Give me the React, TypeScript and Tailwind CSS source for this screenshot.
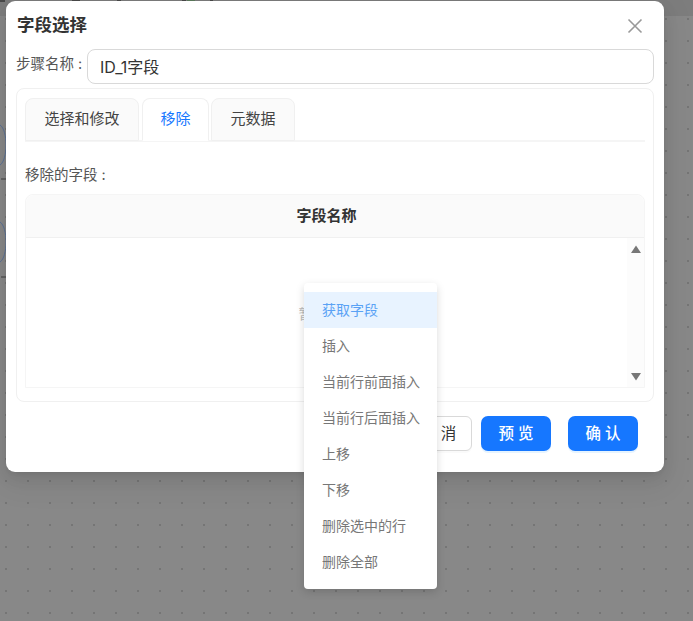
import React from "react";

const font = { fontFamily: 'Inter, "Noto Sans CJK SC", sans-serif' };

const menuItems = ["插入", "当前行前面插入", "当前行后面插入", "上移", "下移", "删除选中的行", "删除全部"];

function CanvasMarks() {
  return (
    <svg className="absolute left-0 top-0" width="693" height="300" fill="none">
      <g stroke="#5a7196" strokeWidth="1">
        <path d="M0 125 C8 130 8 160 0 165" />
        <path d="M0 222 C8 227 8 257 0 262" />
      </g>
      <g stroke="#3f3f3f" strokeWidth="1">
        <path d="M1 179H6" />
        <path d="M1 277H6" />
      </g>
      <g fill="#4a4a4a" stroke="none">
        <rect x="0" y="0" width="5" height="2" />
        <rect x="72" y="0" width="8" height="1" />
        <rect x="117" y="0" width="4" height="1" />
        <rect x="182" y="0" width="4" height="1" />
        <rect x="210" y="0" width="3" height="1" />
      </g>
      <rect x="187" y="0" width="8" height="1" fill="#5c7a5c" />
    </svg>
  );
}

function Tab({ label, active, className }: { label: string; active?: boolean; className: string }) {
  return (
    <div
      className={`flex h-[43px] items-center justify-center rounded-t-[8px] border border-[#f0f0f0] text-[15px] ${
        active ? "border-b-white bg-white text-[#1677ff]" : "bg-[#fafafa] text-[#444]"
      } ${className}`}
    >
      {label}
    </div>
  );
}

export default function App() {
  return (
    <div className="relative flex h-[621px] w-[693px] flex-col overflow-hidden bg-[#888888]" style={font}>
      <div className="h-[16px] shrink-0 bg-[#7d7d7d]" />
      <div className="flex-1 bg-[radial-gradient(circle,#757575_0.9px,transparent_1.1px)] bg-[size:22px_22px] bg-[position:-5px_-8px]" />
      <CanvasMarks />

      {/* dialog */}
      <div className="absolute left-[6px] top-[1px] flex h-[471px] w-[658px] flex-col rounded-[9px] bg-white px-[10px] shadow-[0_6px_16px_0_rgba(0,0,0,0.08),0_3px_6px_-4px_rgba(0,0,0,0.12),0_9px_28px_8px_rgba(0,0,0,0.05)]">
        <div className="flex h-[48px] shrink-0 items-center justify-between pl-px pr-[11px] pt-[1px]">
          <span className="text-[17.5px] font-bold text-[#333]">字段选择</span>
          <svg width="16" height="16" viewBox="0 0 16 16" fill="none" stroke="#999" strokeWidth="1.6">
            <path d="M1.5 1.5 14.5 14.5M14.5 1.5 1.5 14.5" />
          </svg>
        </div>

        <div className="flex h-[35px] shrink-0 items-center">
          <span className="w-[71px] shrink-0 pb-[5px] text-[14.5px] text-[#555]">步骤名称 :</span>
          <div className="flex h-[35px] flex-1 items-center rounded-[8px] border border-[#d9d9d9] pl-[12px] text-[16px] text-[#333]">
            ID_1字段
          </div>
        </div>

        <div className="mt-[4px] flex h-[314px] shrink-0 flex-col rounded-[8px] border border-[#f0f0f0] px-[8px] pt-[9px]">
          <div className="flex h-[44px] shrink-0 border-b-2 border-[#f5f5f5]">
            <Tab label="选择和修改" className="w-[114px]" />
            <Tab label="移除" active className="ml-[3px] w-[67px]" />
            <Tab label="元数据" className="ml-[2px] w-[84px]" />
          </div>

          <div className="flex h-[52px] shrink-0 items-center pt-[13px] text-[14.5px] text-[#555]">移除的字段 :</div>

          <div className="flex h-[194px] shrink-0 flex-col rounded-t-[8px] border border-[#f5f5f5]">
            <div className="flex h-[43px] shrink-0 items-center justify-center rounded-t-[8px] border-b border-[#f0f0f0] bg-[#fafafa] pr-[17px] text-[15px] font-bold text-[#333]">
              字段名称
            </div>
            <div className="flex flex-1">
              <div className="flex flex-1 items-center justify-center pt-[1px] text-[14px] text-[#bbb]">暂无数据</div>
              <div className="flex w-[17px] shrink-0 flex-col items-center justify-between bg-[#fcfcfc] pb-[6px] pt-[7px]">
                <svg width="10" height="8" viewBox="0 0 10 8" fill="#777"><path d="M5 0.5 10 8H0Z" /></svg>
                <svg width="10" height="8" viewBox="0 0 10 8" fill="#777"><path d="M0 0H10L5 7.5Z" /></svg>
              </div>
            </div>
          </div>
        </div>

        <div className="mt-[14px] flex shrink-0 items-center pl-[386px]">
          <div className="flex h-[35px] w-[70px] items-center justify-center rounded-[6px] border border-[#d9d9d9] bg-white pl-[3px] text-[15.5px] text-[#333] shadow-[0_2px_0_rgba(0,0,0,0.02)]">
            取 消
          </div>
          <div className="ml-[9px] flex h-[35px] w-[70px] items-center justify-center rounded-[7px] bg-[#1677ff] text-[15.5px] font-medium text-white shadow-[0_2px_0_rgba(5,145,255,0.1)]">
            预 览
          </div>
          <div className="ml-[17px] flex h-[35px] w-[70px] items-center justify-center rounded-[7px] bg-[#1677ff] text-[15.5px] font-medium text-white shadow-[0_2px_0_rgba(5,145,255,0.1)]">
            确 认
          </div>
        </div>
      </div>

      {/* context menu */}
      <div className="absolute left-[304px] top-[283px] w-[133px] rounded-[4px] bg-white py-[9px] text-[14px] text-[#777] shadow-[0_3px_8px_rgba(0,0,0,0.15)]">
        <div className="flex h-[36px] items-center bg-[#e8f3ff] pb-[2px] pl-[18px] text-[#5aa2f5]">获取字段</div>
        {menuItems.map((item) => (
          <div key={item} className="flex h-[36px] items-center whitespace-nowrap pb-[1px] pl-[18px]">
            {item}
          </div>
        ))}
      </div>
    </div>
  );
}
